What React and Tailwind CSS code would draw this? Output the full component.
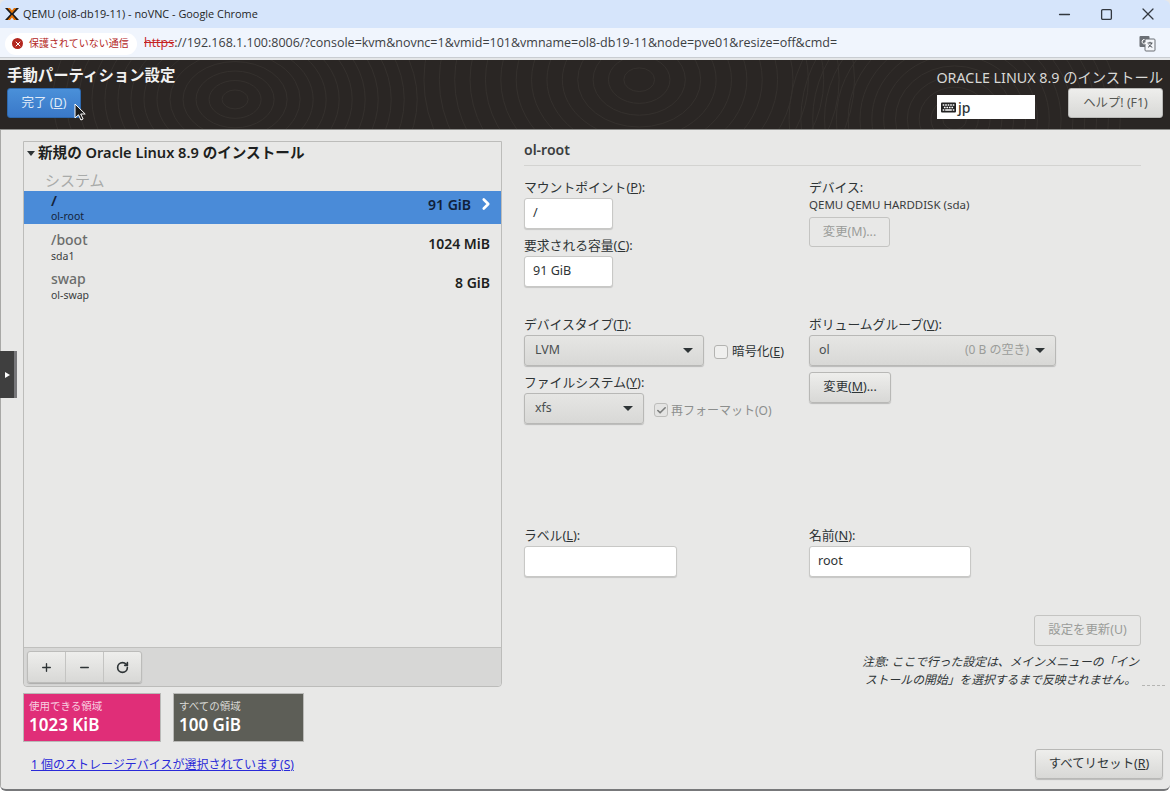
import React from 'react';
import { FaKeyboard } from 'react-icons/fa';
import { Minus, Square, X, ChevronRight, RotateCw, Plus, Check } from 'lucide-react';

const font = { fontFamily: '"Noto Sans", "Noto Sans CJK JP", sans-serif' };

const buttonClass = 'flex items-center justify-center rounded-[3px] border border-[#b8b8b6] bg-gradient-to-b from-[#eeeeec] to-[#d8d8d6] text-[12.4px] text-[#2e3436] shadow-[0_1px_1px_rgba(0,0,0,0.2)]';
const disabledButtonClass = 'flex items-center justify-center rounded-[3px] border border-[#c4c4c2] bg-[#e8e8e7] text-[12.4px] text-[#9a9c99]';
const inputClass = 'flex h-[31px] items-center rounded-[3px] border border-[#c8c8c6] bg-white px-2 text-[12.6px] text-[#2e3436] shadow-[0_1px_1px_rgba(0,0,0,0.15)]';

const Caret = () => <span className="h-0 w-0 border-x-[5px] border-t-[5px] border-x-transparent border-t-[#2e3436]" />;

const Label = ({ children, className = '' }) => (
  <div className={`text-[12.8px] leading-[18px] text-[#2e3436] ${className}`}>{children}</div>
);

const Select = ({ className, children }) => (
  <div className={`flex h-[31px] items-center justify-between rounded-[3px] border border-[#b8b8b6] bg-gradient-to-b from-[#e6e6e4] to-[#d8d8d6] pl-2.5 pr-2.5 text-[12.4px] text-[#4a4f50] shadow-[0_1px_1px_rgba(0,0,0,0.2)] ${className}`}>
    {children}
    <Caret />
  </div>
);

const mounts = [
  { name: '/boot', device: 'sda1', size: '1024 MiB' },
  { name: 'swap', device: 'ol-swap', size: '8 GiB' },
];

const rings = [12, 24, 36, 48, 60, 72, 84, 96, 108, 120, 132, 144, 156, 168];

const HeaderPattern = () => (
  <svg className="absolute inset-0 h-full w-full" viewBox="0 0 1170 70" fill="none" stroke="#35312e" strokeWidth="1">
    {rings.map((r) => (
      <React.Fragment key={r}>
        <ellipse cx="230" cy="40" rx={r * 1.1} ry={r * 0.8} />
        <ellipse cx="640" cy="20" rx={r * 1.3} ry={r} />
        <ellipse cx="960" cy="60" rx={r} ry={r * 0.9} />
      </React.Fragment>
    ))}
  </svg>
);

const ProxmoxLogo = () => (
  <svg width="14" height="14" viewBox="0 0 14 14">
    <path d="M0 1h3l4 4.6L11 1h3L8.5 7l5.5 6h-3L7 8.4 3 13H0l5.5-6z" fill="#1c1c1c" />
    <path d="M2.5 1h2.5L7 3.4 9 1h2.5L7 6.2z" fill="#e57000" />
    <path d="M2.5 13H5l2-2.4L9 13h2.5L7 7.8z" fill="#e57000" />
  </svg>
);

const TranslateIcon = () => (
  <svg width="17" height="17" viewBox="0 0 17 17">
    <rect x="0.5" y="1" width="10" height="11" rx="1" fill="#6b6f75" />
    <rect x="6" y="4" width="10" height="12" rx="1" fill="#f4f6fa" stroke="#6b6f75" />
    <path d="M5.5 4.5a2.2 2.2 0 1 0 1.6 3.4H5.4" fill="none" stroke="#fff" strokeWidth="1" />
    <path d="M8.5 8h5M11 6.8V8M12.6 8c-.5 2-2 3.500-3.600 4.300M9.800 9.500c.7 1.300 2 2.300 3.500 2.800" fill="none" stroke="#4b4f55" strokeWidth="1" />
  </svg>
);

const Cursor = () => (
  <svg className="absolute left-[74px] top-[103px]" width="12" height="18" viewBox="0 0 12 18">
    <path d="M1 1v14l3.500-3.200 2.400 5.200 2.200-1-2.400-5h4.500z" fill="#1a1a1a" stroke="#fff" strokeWidth="1" />
  </svg>
);

export default function App() {
  return (
    <div style={font} className="relative flex h-[791px] w-[1170px] flex-col overflow-hidden rounded-b-md border-b-2 border-[#77787a] bg-[#e8e8e7]">
      {/* chrome title bar */}
      <div className="flex h-[28px] shrink-0 items-center justify-between rounded-t-md bg-[#d6e5fb] pl-[5px]">
        <div className="flex items-center gap-[4px] text-[10.9px] text-[#1f1f1f]">
          <ProxmoxLogo />
          <span style={{ fontFamily: '"Open Sans", sans-serif' }}>QEMU (ol8-db19-11) - noVNC - Google Chrome</span>
        </div>
        <div className="flex items-center gap-[22px] pr-[12px] text-[#33383f]">
          <div className="flex w-[20px] justify-center"><Minus size={17} strokeWidth={1.8} /></div>
          <div className="flex w-[20px] justify-center"><Square size={13} strokeWidth={2.4} /></div>
          <div className="flex w-[20px] justify-center"><X size={20} strokeWidth={1.5} /></div>
        </div>
      </div>

      {/* address bar */}
      <div className="flex h-[30px] shrink-0 items-center justify-between border-b border-[#c9cdd2] bg-[#f0f5fd] pl-[5px] pr-[14px] pt-[2px]">
        <div className="flex items-center">
          <div className="flex h-[22px] w-[132px] items-center gap-[6px] rounded-full bg-white pl-[7px] text-[10px] text-[#b3261e]">
            <span className="flex h-[11px] w-[11px] items-center justify-center rounded-full bg-[#b3261e]">
              <X size={8} strokeWidth={3} className="text-white" />
            </span>
            保護されていない通信
          </div>
          <div className="ml-[7px] text-[12.5px] text-[#3c4043]" style={{ fontFamily: '"Open Sans", sans-serif' }}>
            <span className="text-[#c5221f] line-through">https</span>://192.168.1.100:8006/?console=kvm&amp;novnc=1&amp;vmid=101&amp;vmname=ol8-db19-11&amp;node=pve01&amp;resize=off&amp;cmd=
          </div>
        </div>
        <TranslateIcon />
      </div>

      <div className="h-[2px] shrink-0 bg-[#e4e6e8]" />

      {/* installer header */}
      <div className="relative flex h-[70px] shrink-0 justify-between overflow-hidden border-b border-[#8d8d8b] bg-[#2a2624] pl-[7px] pr-[7px]">
        <HeaderPattern />
        <div className="relative pt-[5px]">
          <div className="text-[15.4px] font-semibold leading-[22px] text-[#f2f2f2]">手動パーティション設定</div>
          <div className="mt-[1px] flex h-[30px] w-[74px] items-center justify-center rounded-[3px] border border-[#2d68ad] bg-gradient-to-b from-[#4a90d9] to-[#3a78c8] text-[12.5px] text-[#dfeaf7]">
            完了 (<u>D</u>)
          </div>
        </div>
        <div className="relative flex flex-col items-end pt-[8px]">
          <div className="text-[14.3px] leading-[20px] text-[#d8d8d6]">ORACLE LINUX 8.9 のインストール</div>
          <div className="flex items-start gap-[33px]">
            <div className="mt-[7px] flex h-[24px] w-[98px] items-center gap-[2px] bg-white pl-[4px] text-[14px] font-medium text-[#2e3436]">
              <FaKeyboard size={15} className="text-[#222]" />
              jp
            </div>
            <div className={`${buttonClass} h-[30px] w-[95px] !text-[#555753]`}>ヘルプ! (F1)</div>
          </div>
        </div>
      </div>
      <Cursor />

      {/* body */}
      <div className="flex min-h-0 flex-1 border-l border-[#a8a8a6] pl-[22px] pr-[7px]">
        {/* left column */}
        <div className="flex w-[479px] shrink-0 flex-col pt-[11px]">
          <div className="flex h-[546px] flex-col rounded-b-[4px] border border-[#bcbcba]">
            <div className="flex-1">
              <div className="flex h-[22px] items-center pl-[3px] text-[14.6px] font-semibold text-[#1d1f20]">
                <span className="mr-[3px] h-0 w-0 border-x-[4px] border-t-[5px] border-x-transparent border-t-[#2e3436]" />
                新規の Oracle Linux 8.9 のインストール
              </div>
              <div className="h-[27px] pl-[21px] pt-[6px] text-[15px] leading-[20px] text-[#a9abaa]">システム</div>
              <div className="flex h-[33px] justify-between bg-[#4a8bd8] pl-[27px] pr-[6px]">
                <div className="pt-[1px]">
                  <div className="text-[15px] font-semibold leading-[16px] text-[#14233a]">/</div>
                  <div className="mt-[1px] text-[10.5px] leading-[15px] text-[#14233a]">ol-root</div>
                </div>
                <div className="flex h-[26px] items-center gap-[6px] text-[14px] font-semibold text-[#10203a]">
                  91 GiB
                  <ChevronRight size={18} strokeWidth={3.5} className="text-white" />
                </div>
              </div>
              {mounts.map((mount) => (
                <div key={mount.name} className="flex h-[39px] items-center justify-between pl-[27px] pr-[11px]">
                  <div className="self-start pt-[7px]">
                    <div className="text-[14px] font-medium leading-[18px] text-[#6b6d6c]">{mount.name}</div>
                    <div className="text-[10.5px] leading-[15px] text-[#3a3d3e]">{mount.device}</div>
                  </div>
                  <div className="text-[14px] font-semibold text-[#1d1f20]">{mount.size}</div>
                </div>
              ))}
            </div>
            <div className="flex h-[39px] items-center rounded-b-[4px] border-t border-[#c0c0be] bg-[#d7d7d6] pl-[3px]">
              <div className="flex h-[32px] rounded-[3px] border border-[#bcbcba] bg-gradient-to-b from-[#eeeeec] to-[#d8d8d6] text-[#2e3436] shadow-[0_1px_1px_rgba(0,0,0,0.2)]">
                <div className="flex w-[38px] items-center justify-center border-r border-[#c4c4c2]"><Plus size={13} strokeWidth={2.5} /></div>
                <div className="flex w-[38px] items-center justify-center border-r border-[#c4c4c2]"><Minus size={13} strokeWidth={2.5} /></div>
                <div className="flex w-[37px] items-center justify-center"><RotateCw size={13} strokeWidth={3} /></div>
              </div>
            </div>
          </div>
          <div className="mt-[6px] flex gap-[12px]">
            <div className="h-[49px] w-[138px] border border-[#b9b9b7] bg-[#e02e78] pl-[5px] pt-[5px] text-white">
              <div className="text-[10.5px] leading-[15px] text-[#f8cfe0]">使用できる領域</div>
              <div className="text-[17px] font-semibold leading-[21px]">1023 KiB</div>
            </div>
            <div className="h-[49px] w-[131px] border border-[#b9b9b7] bg-[#5d5e57] pl-[5px] pt-[5px] text-white">
              <div className="text-[10.5px] leading-[15px] text-[#d8d8d4]">すべての領域</div>
              <div className="text-[17px] font-semibold leading-[21px]">100 GiB</div>
            </div>
          </div>
          <div className="ml-[8px] mt-[14px] text-[12px] leading-[18px] text-[#2a2ad8] underline">1 個のストレージデバイスが選択されています(S)</div>
        </div>

        {/* right column */}
        <div className="ml-[22px] flex min-w-0 flex-1 flex-col">
          <div className="mr-[22px] h-[36px] border-b border-[#d3d3d1] pt-[11px] text-[14px] font-semibold leading-[18px] text-[#3a3d3e]">ol-root</div>

          <div className="mt-[12px] flex h-[109px]">
            <div className="w-[285px]">
              <Label>マウントポイント(<u>P</u>):</Label>
              <div className={`${inputClass} mt-[2px] w-[89px]`}>/</div>
              <Label className="mt-[7px]">要求される容量(<u>C</u>):</Label>
              <div className={`${inputClass} mt-[2px] w-[89px]`}>91 GiB</div>
            </div>
            <div>
              <Label>デバイス:</Label>
              <div className="text-[11.5px] leading-[18px] text-[#3a3d3e]">QEMU QEMU HARDDISK (sda)</div>
              <div className={`${disabledButtonClass} mt-[3px] h-[30px] w-[81px]`}>変更(M)...</div>
            </div>
          </div>

          <div className="mt-[28px] flex h-[190px]">
            <div className="w-[285px]">
              <Label>デバイスタイプ(<u>T</u>):</Label>
              <div className="mt-[2px] flex items-center">
                <Select className="w-[180px]">LVM</Select>
                <div className="ml-[10px] mt-[3px] h-[14px] w-[14px] rounded-[3px] border border-[#b3b3b1] bg-[#efefee]" />
                <div className="ml-[4px] pt-[4px] text-[12.5px] text-[#2e3436]">暗号化(<u>E</u>)</div>
              </div>
              <Label className="mt-[7px]">ファイルシステム(<u>Y</u>):</Label>
              <div className="mt-[2px] flex items-center">
                <Select className="w-[120px]">xfs</Select>
                <div className="ml-[10px] mt-[3px] flex h-[14px] w-[14px] items-center justify-center rounded-[3px] border border-[#bdbdbb] bg-[#e4e4e3]">
                  <Check size={11} strokeWidth={3.5} className="text-[#7a7c7b]" />
                </div>
                <div className="ml-[3px] pt-[5px] text-[12px] text-[#8c8e8d]">再フォーマット(O)</div>
              </div>
            </div>
            <div>
              <Label>ボリュームグループ(<u>V</u>):</Label>
              <Select className="mt-[2px] w-[247px] !pl-[9px]">
                <span className="flex flex-1 items-center justify-between pr-[6px]">
                  ol
                  <span className="text-[12px] text-[#9a9c99]">(0 B の空き)</span>
                </span>
              </Select>
              <div className={`${buttonClass} mt-[6px] h-[31px] w-[82px]`}>変更(<u>M</u>)...</div>
            </div>
          </div>

          <div className="mt-[21px] flex">
            <div className="w-[285px]">
              <Label>ラベル(<u>L</u>):</Label>
              <div className={`${inputClass} mt-[2px] w-[153px]`} />
            </div>
            <div>
              <Label>名前(<u>N</u>):</Label>
              <div className={`${inputClass} mt-[2px] w-[162px]`}>root</div>
            </div>
          </div>

          <div className={`${disabledButtonClass} mr-[22px] mt-[38px] h-[31px] w-[107px] self-end`}>設定を更新(U)</div>

          <div className="mr-[24px] mt-[6px] self-end text-center text-[11.8px] italic leading-[18px] text-[#2e3436]">
            注意: ここで行った設定は、メインメニューの「イン<br />ストールの開始」を選択するまで反映されません。
          </div>

          <div className={`${buttonClass} mt-auto mb-[10px] h-[30px] w-[128px] self-end`}>すべてリセット(<u>R</u>)</div>
        </div>
      </div>

      {/* collapsed side panel handle */}
      <div className="absolute left-0 top-[351px] flex h-[47px] w-[17px] items-center justify-center border-r-[3px] border-[#77777a] bg-[#3f3f3f]">
        <span className="h-0 w-0 border-y-[3px] border-l-[5px] border-y-transparent border-l-white" />
      </div>
      <div className="absolute right-[5px] top-[685px] w-[23px] border-t border-dashed border-[#b5b5b3]" />
    </div>
  );
}
